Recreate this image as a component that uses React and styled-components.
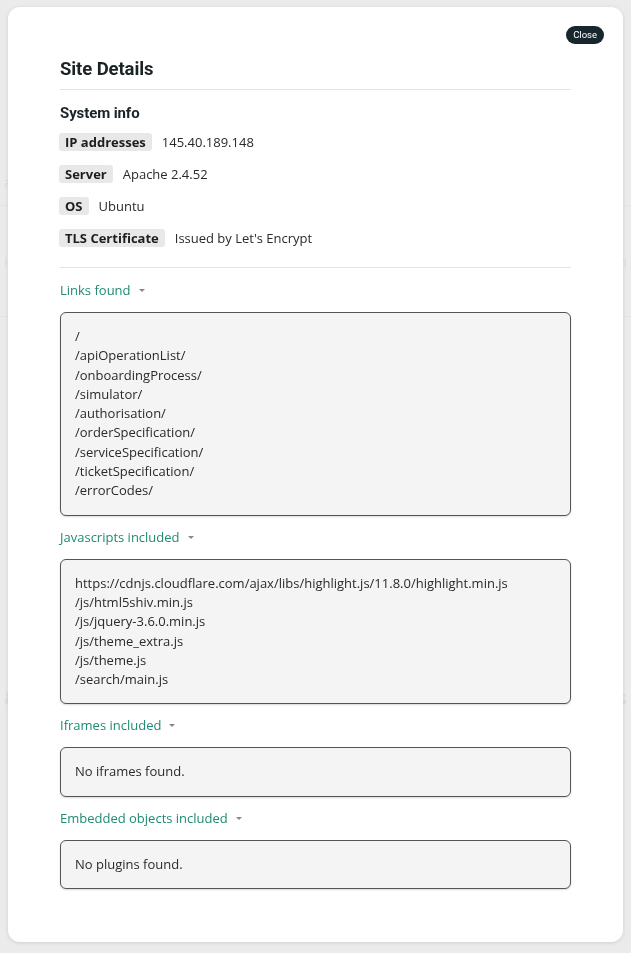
import React from "react";
import styled, { createGlobalStyle } from "styled-components";

const GlobalStyle = createGlobalStyle`
  html, body { margin: 0; padding: 0; }
  body {
    background: #ececec;
    font-family: "Open Sans", "Noto Sans", sans-serif;
    color: #222;
    overflow: hidden;
  }
`;

const Page = styled.div`
  width: 631px;
  height: 953px;
  background: #f7f7f7;
  display: flex;
  flex-direction: column;
  font-family: "Open Sans", sans-serif;
  color: #999;
`;

const PageBand = styled.div`
  height: ${(p) => p.h}px;
  border-bottom: ${(p) => (p.line ? "1px solid #cfcfcf" : "none")};
  display: flex;
  align-items: center;
  justify-content: space-between;
  padding: 0 4px;
  font-size: 14px;
`;

const Ghost = styled.span`
  font-size: ${(p) => p.size || 14}px;
  font-weight: ${(p) => (p.bold ? 700 : 400)};
  color: ${(p) => p.color || "#b5b5b5"};
`;

const Overlay = styled.div`
  position: fixed;
  inset: 0;
  background: rgba(232, 232, 232, 0.82);
`;

const Modal = styled.div`
  position: fixed;
  top: 7px;
  left: 8px;
  width: 615px;
  height: 935px;
  box-sizing: border-box;
  background: #fff;
  border-radius: 12px;
  box-shadow: 0 1px 4px rgba(0, 0, 0, 0.12);
  padding: 50px 52px 0 52px;
  display: flex;
  flex-direction: column;
`;

const CloseButton = styled.button`
  position: absolute;
  top: 19px;
  right: 19px;
  height: 18px;
  padding: 0 7px;
  border: none;
  border-radius: 9px;
  background: #17272d;
  color: #fff;
  font-family: "Roboto", sans-serif;
  font-size: 9.5px;
  line-height: 18px;
  cursor: pointer;
`;

const Title = styled.h2`
  margin: 0;
  font-family: "Roboto", sans-serif;
  font-weight: 700;
  font-size: 18.5px;
  line-height: 24px;
  letter-spacing: -0.1px;
  color: #1b2327;
  padding-bottom: 8px;
  border-bottom: 1px solid #e3e3e3;
`;

const SubTitle = styled.h3`
  margin: 13px 0 0;
  font-family: "Roboto", sans-serif;
  font-weight: 700;
  font-size: 15px;
  line-height: 20px;
  letter-spacing: -0.1px;
  color: #1b2327;
`;

const InfoList = styled.div`
  display: flex;
  flex-direction: column;
  gap: 14px;
  margin-top: 10px;
  padding-bottom: 20px;
  border-bottom: 1px solid #e3e3e3;
`;

const InfoRow = styled.div`
  display: flex;
  align-items: center;
  gap: 10px;
  height: 18px;
  font-size: 13px;
`;

const Tag = styled.span`
  display: inline-block;
  margin-left: -1px;
  background: #e8e8e8;
  border-radius: 3px;
  padding: 0 6px;
  height: 18px;
  line-height: 18px;
  font-weight: 700;
  font-size: 13px;
  color: #1d1d1d;
`;

const Value = styled.span`
  color: #2a2a2a;
`;

const Sections = styled.div`
  display: flex;
  flex-direction: column;
  margin-top: 13px;
`;

const Section = styled.section`
  display: flex;
  flex-direction: column;
  gap: 13px;
  margin-bottom: 12px;
`;

const Toggle = styled.div`
  display: flex;
  align-items: center;
  gap: 8px;
  font-size: 13px;
  line-height: 18px;
  color: #1f8b72;
`;

const Caret = styled.span`
  width: 0;
  height: 0;
  border-left: 3px solid transparent;
  border-right: 3px solid transparent;
  border-top: 3.5px solid #888;
  margin-top: 1px;
`;

const Box = styled.div`
  background: #f4f4f4;
  border: 1px solid #555;
  border-radius: 6px;
  box-shadow: 0 1px 2px rgba(0, 0, 0, 0.15);
  padding: 14px 14px;
  font-size: 13px;
  line-height: 19.3px;
  color: #2a2a2a;
`;

const Line = styled.div`
  white-space: nowrap;
`;

const info = [
  ["IP addresses", "145.40.189.148"],
  ["Server", "Apache 2.4.52"],
  ["OS", "Ubuntu"],
  ["TLS Certificate", "Issued by Let's Encrypt"],
];

const sections = [
  {
    title: "Links found",
    lines: [
      "/",
      "/apiOperationList/",
      "/onboardingProcess/",
      "/simulator/",
      "/authorisation/",
      "/orderSpecification/",
      "/serviceSpecification/",
      "/ticketSpecification/",
      "/errorCodes/",
    ],
  },
  {
    title: "Javascripts included",
    lines: [
      "https://cdnjs.cloudflare.com/ajax/libs/highlight.js/11.8.0/highlight.min.js",
      "/js/html5shiv.min.js",
      "/js/jquery-3.6.0.min.js",
      "/js/theme_extra.js",
      "/js/theme.js",
      "/search/main.js",
    ],
  },
  { title: "Iframes included", lines: ["No iframes found."] },
  { title: "Embedded objects included", lines: ["No plugins found."] },
];

export default function App() {
  return (
    <>
      <GlobalStyle />
      <Page>
        <PageBand h={160} />
        <PageBand h={45} line>
          <Ghost>ar</Ghost>
        </PageBand>
        <PageBand h={110} line>
          <Ghost>ic</Ghost>
          <Ghost>m</Ghost>
        </PageBand>
        <PageBand h={330} />
        <PageBand h={100}>
          <Ghost size={20} bold>&amp;</Ghost>
          <Ghost size={20} bold>s</Ghost>
        </PageBand>
      </Page>
      <Overlay />
      <Modal>
        <CloseButton>Close</CloseButton>
        <Title>Site Details</Title>
        <SubTitle>System info</SubTitle>
        <InfoList>
          {info.map(([k, v]) => (
            <InfoRow key={k}>
              <Tag>{k}</Tag>
              <Value>{v}</Value>
            </InfoRow>
          ))}
        </InfoList>
        <Sections>
          {sections.map((s) => (
            <Section key={s.title}>
              <Toggle>
                {s.title}
                <Caret />
              </Toggle>
              <Box>
                {s.lines.map((l, i) => (
                  <Line key={i}>{l}</Line>
                ))}
              </Box>
            </Section>
          ))}
        </Sections>
      </Modal>
    </>
  );
}
